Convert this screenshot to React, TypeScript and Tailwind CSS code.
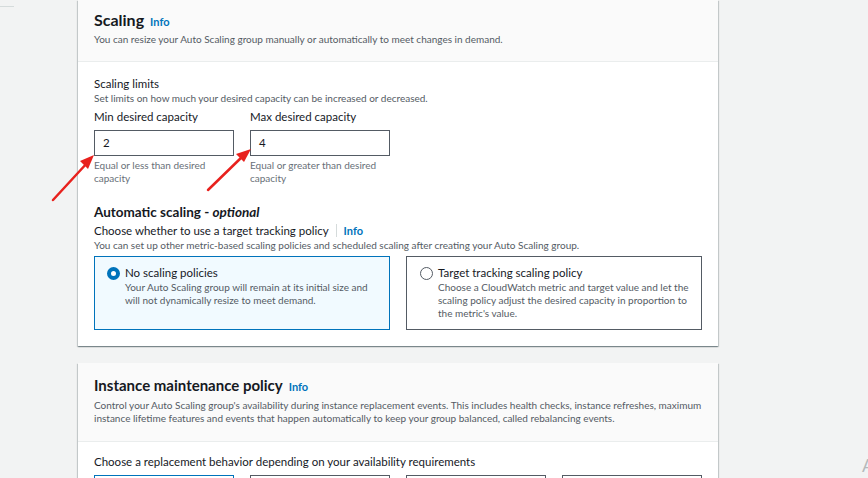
import React from "react";

const font = { fontFamily: 'Lato, "Liberation Sans", Arial, sans-serif' };

function Info() {
    return <span className="text-[11px] font-bold text-[#0073bb]">Info</span>;
}

function Radio({ checked }: { checked?: boolean }) {
    return checked ? (
        <span className="mt-[2px] h-[13px] w-[13px] shrink-0 rounded-full border-[4px] border-[#0073bb] bg-white" />
    ) : (
        <span className="mt-[2px] h-[13px] w-[13px] shrink-0 rounded-full border border-[#545b64] bg-white" />
    );
}

function Field({ label, value, hint }: { label: string; value: string; hint: string }) {
    return (
        <div className="w-[140px]">
            <div className="text-[11.5px] leading-[16px] text-[#16191f]">{label}</div>
            <div className="mt-[5px] flex h-[26px] items-center border border-[#545b64] px-[8px] text-[11.5px] text-[#16191f]">
                {value}
            </div>
            <div className="mt-[3px] text-[10px] leading-[13px] text-[#687078]">{hint}</div>
        </div>
    );
}

export default function App() {
    return (
        <div style={font} className="relative h-[478px] w-[868px] overflow-hidden bg-[#f2f3f3]">
            <div className="absolute left-0 top-[6px] h-px w-[14px] bg-[#d5dbdb]" />

            <div className="ml-[78px] w-[640px]">
                {/* Scaling card */}
                <div className="bg-white shadow-[0_1px_1px_0_rgba(0,28,36,0.3),1px_1px_1px_0_rgba(0,28,36,0.15),-1px_1px_1px_0_rgba(0,28,36,0.15)]">
                    <div className="border-b border-[#eaeded] bg-[#fafafa] px-4 pb-[14px] pt-[10px]">
                        <div className="flex items-baseline gap-[6px]">
                            <h2 className="text-[16px] font-bold leading-[20px] text-[#16191f]">Scaling</h2>
                            <Info />
                        </div>
                        <p className="mt-[1px] text-[10px] leading-[15px] text-[#545b64]">
                            You can resize your Auto Scaling group manually or automatically to meet changes in demand.
                        </p>
                    </div>

                    <div className="px-4 pb-[16px] pt-[14px]">
                        <div className="text-[11.5px] leading-[16px] text-[#16191f]">Scaling limits</div>
                        <div className="text-[10px] leading-[13px] text-[#545b64]">
                            Set limits on how much your desired capacity can be increased or decreased.
                        </div>
                        <div className="mt-[4px] flex gap-4">
                            <Field label="Min desired capacity" value="2" hint="Equal or less than desired capacity" />
                            <Field label="Max desired capacity" value="4" hint="Equal or greater than desired capacity" />
                        </div>

                        <div className="mt-[18px] text-[13.5px] font-bold leading-[18px] text-[#16191f]">
                            Automatic scaling - <i>optional</i>
                        </div>
                        <div className="mt-[2px] flex items-center text-[11.5px] leading-[16px] text-[#16191f]">
                            <span>Choose whether to use a target tracking policy</span>
                            <span className="mx-[7px] h-[13px] w-px bg-[#d5dbdb]" />
                            <Info />
                        </div>
                        <div className="text-[10px] leading-[13px] text-[#545b64]">
                            You can set up other metric-based scaling policies and scheduled scaling after creating your Auto Scaling group.
                        </div>

                        <div className="mt-[4px] grid grid-cols-2 gap-4">
                            <div className="flex h-[74px] gap-[5px] border border-[#0073bb] bg-[#f1faff] pl-[12px] pr-[10px] pt-[8px]">
                                <Radio checked />
                                <div>
                                    <div className="text-[11.5px] leading-[16px] text-[#16191f]">No scaling policies</div>
                                    <div className="text-[10px] leading-[13px] text-[#545b64]">
                                        Your Auto Scaling group will remain at its initial size and will not dynamically resize to meet demand.
                                    </div>
                                </div>
                            </div>
                            <div className="flex h-[74px] gap-[5px] border border-[#545b64] pl-[13px] pr-[8px] pt-[8px]">
                                <Radio />
                                <div>
                                    <div className="text-[11.5px] leading-[16px] text-[#16191f]">Target tracking scaling policy</div>
                                    <div className="text-[10px] leading-[13px] text-[#545b64]">
                                        Choose a CloudWatch metric and target value and let the scaling policy adjust the desired capacity in proportion to the metric's value.
                                    </div>
                                </div>
                            </div>
                        </div>
                    </div>
                </div>

                {/* Instance maintenance policy card */}
                <div className="mt-[17px] bg-white shadow-[0_1px_1px_0_rgba(0,28,36,0.3),1px_1px_1px_0_rgba(0,28,36,0.15),-1px_1px_1px_0_rgba(0,28,36,0.15)]">
                    <div className="border-b border-[#eaeded] bg-[#fafafa] px-4 pb-[16px] pt-[12px]">
                        <div className="flex items-baseline gap-[6px]">
                            <h2 className="text-[15px] font-bold leading-[20px] text-[#16191f]">Instance maintenance policy</h2>
                            <Info />
                        </div>
                        <p className="mt-[4px] text-[10px] leading-[13px] text-[#545b64]">
                            Control your Auto Scaling group's availability during instance replacement events. This includes health checks, instance refreshes, maximum instance lifetime features and events that happen automatically to keep your group balanced, called rebalancing events.
                        </p>
                    </div>
                    <div className="px-4 pt-[12px]">
                        <div className="text-[11.5px] leading-[16px] text-[#16191f]">
                            Choose a replacement behavior depending on your availability requirements
                        </div>
                        <div className="mt-[5px] grid grid-cols-4 gap-4">
                            <div className="h-[40px] border border-[#0073bb]" />
                            <div className="h-[40px] border border-[#545b64]" />
                            <div className="h-[40px] border border-[#545b64]" />
                            <div className="h-[40px] border border-[#545b64]" />
                        </div>
                    </div>
                </div>
            </div>

            <div className="absolute left-[862px] top-[452px] text-[18px] text-[#b5b9bb]">A</div>

            {/* annotation arrows */}
            <svg className="absolute left-0 top-0" width="868" height="478" viewBox="0 0 868 478">
                <g stroke="#e8211d" strokeWidth="2.5" strokeLinecap="round" fill="#e8211d">
                    <line x1="53" y1="200" x2="88" y2="162" />
                    <polygon points="94,155 80,161 88,169" stroke="none" />
                    <line x1="208" y1="190" x2="244" y2="155" />
                    <polygon points="251,149 236,154 244,162" stroke="none" />
                </g>
            </svg>
        </div>
    );
}
